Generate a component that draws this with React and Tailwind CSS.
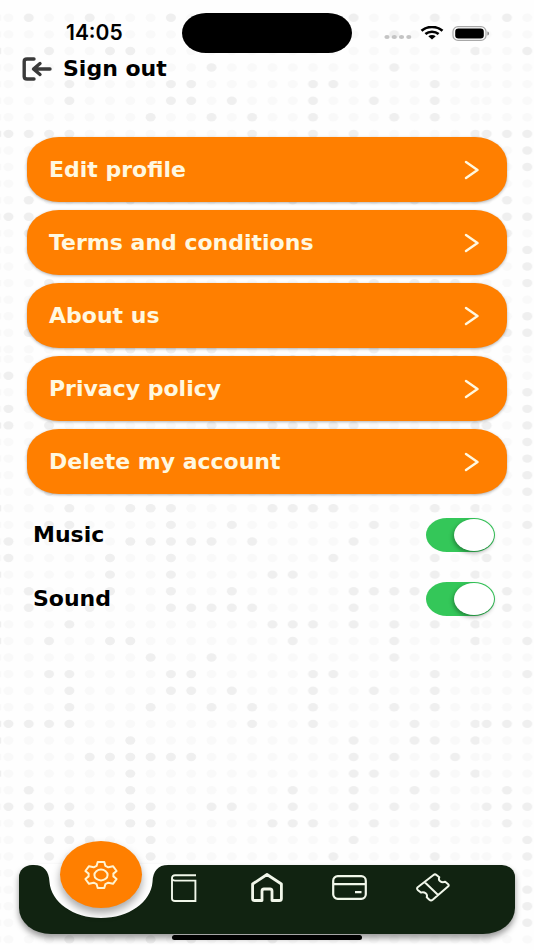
import React, { useState } from 'react';

const MENU_ITEMS = [
  'Edit profile',
  'Terms and conditions',
  'About us',
  'Privacy policy',
  'Delete my account',
];

// Columns of the highlighted dots, one array per row
const TOP_ROWS = [
  [1, 4, 8, 17, 21],
  [19],
  [2, 5, 6, 23],
  [10, 19],
  [3, 8, 9, 15, 16, 21],
  [3, 8, 9, 11, 15, 18, 21],
  [7, 10, 12, 15, 19, 21],
  [0, 1, 2, 3, 12, 15, 17, 23],
  [2], [2], [],
  [1, 6, 14, 17, 20],
  [0, 1, 2],
  [1], [2], [2],
  [2, 17, 18, 20, 21, 22],
  [], [2], [1, 2],
  [4, 5, 6, 7, 8, 9, 10, 18],
];

const BOTTOM_ROWS = [
  [13, 14, 15, 16, 17, 22],
  [0], [2], [0, 2],
  [0, 2, 10, 13, 14, 15, 16, 17, 23],
  [2], [2], [2], [2],
  [3, 6, 7, 8, 13, 14, 15, 16, 21, 23],
  [2, 3, 8, 11, 18],
  [0, 6, 7, 8, 9, 10, 12, 17],
  [0, 5, 8, 16, 21],
  [5, 8, 13, 14, 21, 23],
  [1, 5, 8, 11, 17, 18, 19, 20],
  [1, 4, 8, 9, 10, 11, 12, 17],
  [3, 13, 14, 15, 17, 19, 21, 23],
  [2, 5, 6, 14, 19, 23],
  [7, 10, 19],
  [2, 3, 8, 9, 15, 16, 21],
  [3, 8, 9, 11, 15, 18, 21],
  [3, 7, 10, 12, 15, 19, 21],
  [0, 1, 2, 3, 12, 15, 20, 23],
  [6, 17, 20, 21, 23],
  [4, 5, 6, 7, 8, 9, 17, 19, 22],
  [6, 17, 18, 21, 23],
  [1, 6, 14, 17, 20],
  [0, 1, 2, 3, 6, 7, 10, 11, 14, 17, 19, 21],
  [1, 3, 6, 7, 13, 14, 15, 18, 21],
  [2, 3, 4, 7, 17],
  [2, 6, 7, 16, 21],
  [], [2], [2], [2],
  [3, 7, 9, 13],
];

const COLUMNS = Array.from({ length: 24 }, (_, i) => i);

function DotRows({ rows, top }) {
  return rows.map((marked, r) =>
    COLUMNS.map((c) => (
      <ellipse
        key={`${r}-${c}`}
        cx={7.3 + c * 20.3}
        cy={top + r * 16.58}
        rx="5"
        ry="4.2"
        fill={marked.includes(c) ? '#efefef' : '#f9f9f9'}
      />
    ))
  );
}

function DotBackground() {
  return (
    <svg className="absolute inset-0 -z-10 h-full w-full" aria-hidden="true">
      <defs>
        <pattern id="dots" x="1.2" width="478.2" height="950" patternUnits="userSpaceOnUse">
          <DotRows rows={TOP_ROWS} top={17.8} />
          <DotRows rows={BOTTOM_ROWS} top={359.1} />
        </pattern>
      </defs>
      <rect width="100%" height="100%" fill="url(#dots)" />
    </svg>
  );
}

function StatusBar() {
  return (
    <div className="grid grid-cols-[1fr_170px_1fr] items-center pt-[13px] font-['Inter',sans-serif]">
      <span className="pl-[66px] text-[21px] font-semibold leading-5">14:05</span>
      <div className="h-10 rounded-[24px/20px] bg-black" />
      <div className="flex items-center justify-end gap-2 pr-11">
        <svg width="28" height="6" viewBox="0 0 28 6" fill="#c4c4c4" className="mt-2">
          <ellipse cx="3" cy="3" rx="2.6" ry="2.1" />
          <ellipse cx="10.3" cy="3" rx="2.6" ry="2.1" />
          <ellipse cx="17.5" cy="3" rx="2.6" ry="2.1" />
          <ellipse cx="24.8" cy="3" rx="2.6" ry="2.1" />
        </svg>
        <svg width="24" height="14" viewBox="0 0 24 14" fill="none" stroke="#000" strokeWidth="2.6">
          <path d="M1.5 4.8C7.2-.3 16.8-.3 22.5 4.8" />
          <path d="M5.4 8.1C9 5 15 5 18.6 8.1" />
          <path d="M8.3 10.2C10.3 8.6 13.7 8.6 15.7 10.2L12 13.6Z" fill="#000" stroke="none" />
        </svg>
        <svg width="38" height="15" viewBox="0 0 38 15">
          <rect x="1" y=".6" width="33" height="13.8" rx="5" fill="none" stroke="#a8a8a8" strokeWidth="1.2" />
          <rect x="3.2" y="2.5" width="28.6" height="10" rx="3.2" />
          <path d="M35.4 5.5C37.6 6 37.6 9 35.4 9.5Z" fill="#8a8a8a" />
        </svg>
      </div>
    </div>
  );
}

function Toggle({ label, checked, onChange }) {
  return (
    <label className="flex h-16 items-center justify-between">
      {label}
      <input
        type="checkbox"
        role="switch"
        checked={checked}
        onChange={onChange}
        className="flex h-[34px] w-[69px] cursor-pointer appearance-none items-center rounded-[21px/17px] bg-gray-300 px-px before:h-8 before:w-10 before:rounded-[50%] before:bg-white before:shadow-[-1px_2px_4px_rgba(0,0,0,0.35)] checked:justify-end checked:bg-[#34c759]"
      />
    </label>
  );
}

const NAV_ITEMS = [
  {
    label: 'Rules',
    icon: (
      <svg width="26" height="28" viewBox="0 0 26 28" fill="none" stroke="currentColor" strokeWidth="1.9">
        <path d="M25 1.3H4C2.2 1.3 1 2.4 1 4v20.5C1 26 2.2 27 4 27H24.4V6.6H4C2.2 6.6 1 5.6 1 4" />
      </svg>
    ),
  },
  {
    label: 'Home',
    icon: (
      <svg width="32" height="29" viewBox="0 0 32 29" fill="none" stroke="currentColor" strokeWidth="2.8" strokeLinejoin="round">
        <path d="M1.6 11 16 1.5 30.4 11V25.6A2 2 0 0 1 28.4 27.5H21V17.8A2 2 0 0 0 19 16H13A2 2 0 0 0 11 17.8V27.5H3.6A2 2 0 0 1 1.6 25.6Z" />
      </svg>
    ),
  },
  {
    label: 'Payments',
    icon: (
      <svg width="35" height="25" viewBox="0 0 35 25" fill="none" stroke="currentColor" strokeWidth="2.2">
        <rect x="1.2" y="1.2" width="32.6" height="22.6" rx="4.5" />
        <path d="M1 9.2H34M23 17.2H29.5" />
      </svg>
    ),
  },
  {
    label: 'Tickets',
    icon: (
      <svg width="34" height="29" viewBox="0 0 34 29" fill="none" stroke="currentColor" strokeWidth="2" strokeLinejoin="round">
        <path d="M1.7 14.3 17.5 2Q19 .8 20.5 2L23.3 4.2C21.8 7.4 25.2 10.2 29.2 8.8L32.2 11.2Q33.4 12.4 32 13.6L16.7 26.7Q15 28 13.4 26.7L10.7 24.3C12 21 8.6 18.4 4.9 19.6L1.7 16.9Q.4 15.6 1.7 14.3ZM8.8 9.2 21.8 21.8" />
      </svg>
    ),
  },
];

function BottomNav() {
  return (
    <nav className="mx-[19px] mt-auto flex h-[69px] rounded-[13px_13px_32px_32px/12px_12px_26px_26px] bg-[#112311] px-[41px] text-[#f1f7ea] shadow-[0_4px_6px_rgba(0,0,0,0.4)]">
      <div className="relative flex flex-1 justify-center">
        {/* cut-out behind the active tab */}
        <svg className="absolute -top-px" width="134" height="55" viewBox="0 0 134 55" fill="#fff">
          <path d="M0 0V1C10 1 15 7 15.5 18C17 38 39 54 67 54C95 54 117 38 118.5 18C119 7 124 1 134 1V0Z" />
        </svg>
        <button
          aria-label="Settings"
          className="absolute -top-6 flex h-[67px] w-[82px] items-center justify-center rounded-[50%] bg-[#ff7f00] text-[#fff3cf] shadow-[0_5px_8px_rgba(0,0,0,0.35)]"
        >
          <svg width="34" height="28" viewBox="0 0 34 28" fill="none" stroke="currentColor" strokeWidth="2" strokeLinejoin="round">
            <path d="M13.7 1H20.3L21.4 4.9L24.3 6.3L29 5.2L32.6 10L29.4 12.6V15.4L32.6 18L29 22.8L24.3 21.7L21.4 23.1L20.3 27H13.7L12.6 23.1L9.7 21.7L5 22.8L1.4 18L4.6 15.4V12.6L1.4 10L5 5.2L9.7 6.3L12.6 4.9Z" />
            <ellipse cx="17" cy="14" rx="6.6" ry="5.4" />
          </svg>
        </button>
      </div>
      {NAV_ITEMS.map(({ label, icon }) => (
        <button key={label} aria-label={label} className="flex flex-1 items-center justify-center pb-6">
          {icon}
        </button>
      ))}
    </nav>
  );
}

export default function App() {
  const [music, setMusic] = useState(true);
  const [sound, setSound] = useState(true);

  return (
    <div className="relative isolate flex min-h-screen flex-col overflow-hidden bg-[#fefefe] font-['DejaVu_Sans',sans-serif] text-black">
      <DotBackground />
      <StatusBar />

      <button className="flex h-8 items-center gap-[11px] self-start pl-[22px] text-[22px] font-bold leading-7">
        <svg width="30" height="24" viewBox="0 0 30 24" fill="none" stroke="#3a3a3a" strokeWidth="3.4" strokeLinecap="round" strokeLinejoin="round">
          <path d="M12 2H5Q2.2 2 2.2 4.5V19.5Q2.2 22 5 22H12" />
          <path d="M28 12H12M18 6.5 11.5 12 18 17.5" />
        </svg>
        Sign out
      </button>

      <main className="mt-[52px] px-[27px] text-[22px] font-bold leading-7">
        <div className="flex flex-col gap-2">
          {MENU_ITEMS.map((item) => (
            <button
              key={item}
              className="flex h-[65px] items-center justify-between rounded-[32px/26px] bg-[#ff7f00] pl-[22px] pr-7 text-[#fff8e0] shadow-[0_1px_3px_rgba(0,0,0,0.3)]"
            >
              {item}
              <svg width="15" height="20" viewBox="0 0 15 20" fill="none" stroke="currentColor" strokeWidth="2.4" strokeLinecap="round" strokeLinejoin="round">
                <path d="M2 2 13.5 10 2 18" />
              </svg>
            </button>
          ))}
        </div>
        <div className="mt-[9px] pl-[6px] pr-3">
          <Toggle label="Music" checked={music} onChange={() => setMusic(!music)} />
          <Toggle label="Sound" checked={sound} onChange={() => setSound(!sound)} />
        </div>
      </main>

      <BottomNav />
      <div className="mb-[10px] mt-px h-[5px] w-[190px] self-center rounded-full bg-black" />
    </div>
  );
}
